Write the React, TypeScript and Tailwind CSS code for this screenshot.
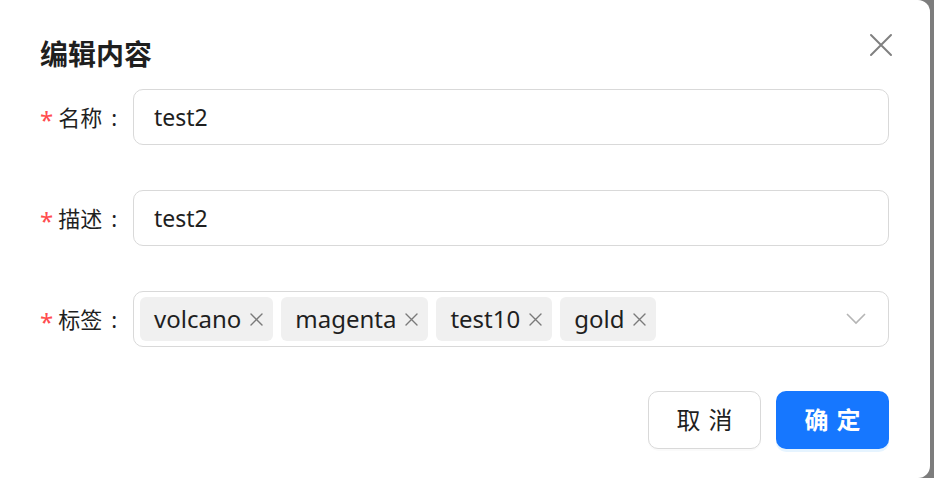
import React from "react";

const tags = ["volcano", "magenta", "test10", "gold"];

function Label({ text }: { text: string }) {
  return (
    <div className="w-[93px] shrink-0 flex items-center text-[22px] text-[#1f1f1f]">
      <span className="text-[#ff4d4f] mr-[5px] text-[24px] leading-none pt-[6px]">*</span>
      <span>{text}</span>
      <span className="ml-[9px]">:</span>
    </div>
  );
}

function CloseSmall() {
  return (
    <svg width="15" height="15" viewBox="0 0 15 15" className="shrink-0">
      <path d="M2 2 L13 13 M13 2 L2 13" stroke="#7a7a7a" strokeWidth="1.4" strokeLinecap="round" />
    </svg>
  );
}

export default function App() {
  return (
    <div
      className="w-[934px] h-[478px] bg-[#7d7d7d] overflow-hidden"
      style={{ fontFamily: '"Noto Sans", "Noto Sans CJK SC", sans-serif' }}
    >
      <div className="relative w-[930px] h-[478px] bg-white rounded-r-[12px] pl-[40px] pr-[41px] pt-[38px] flex flex-col">
        <button className="absolute left-[868px] top-[32px] w-[26px] h-[26px] flex items-center justify-center">
          <svg width="24" height="24" viewBox="0 0 24 24">
            <path d="M2 2 L22 22 M22 2 L2 22" stroke="#808080" strokeWidth="2" strokeLinecap="round" />
          </svg>
        </button>

        <h1 className="h-[32px] leading-[32px] text-[28px] font-bold text-[#1f1f1f]">编辑内容</h1>

        <div className="mt-[19px] flex flex-col gap-[45px]">
          <div className="flex items-center h-[56px]">
            <Label text="名称" />
            <div className="flex-1 h-[56px] border border-[#d9d9d9] rounded-[10px] flex items-center px-[20px] text-[23px] text-[#1f1f1f]">
              test2
            </div>
          </div>

          <div className="flex items-center h-[56px]">
            <Label text="描述" />
            <div className="flex-1 h-[56px] border border-[#d9d9d9] rounded-[10px] flex items-center px-[20px] text-[23px] text-[#1f1f1f]">
              test2
            </div>
          </div>

          <div className="flex items-center h-[56px]">
            <Label text="标签" />
            <div className="flex-1 h-[56px] border border-[#d9d9d9] rounded-[10px] flex items-center pl-[6px] pr-[22px]">
              <div className="flex-1 flex items-center gap-[8px]">
                {tags.map((t) => (
                  <div
                    key={t}
                    className="h-[44px] bg-[#f0f0f0] rounded-[6px] flex items-center gap-[8px] pl-[14px] pr-[9px] text-[24px] text-[#1f1f1f]"
                  >
                    <span>{t}</span>
                    <CloseSmall />
                  </div>
                ))}
              </div>
              <svg width="20" height="12" viewBox="0 0 20 12">
                <path d="M1 1 L10 10 L19 1" fill="none" stroke="#b5b5b5" strokeWidth="1.6" />
              </svg>
            </div>
          </div>
        </div>

        <div className="mt-[44px] flex justify-end gap-[15px]">
          <button className="w-[113px] h-[58px] border border-[#d9d9d9] rounded-[10px] bg-white text-[24px] text-[#1f1f1f] tracking-[8px] pl-[8px] shadow-[0_2px_0_rgba(0,0,0,0.02)]">
            取消
          </button>
          <button className="w-[113px] h-[58px] rounded-[10px] bg-[#1677ff] text-[24px] font-bold text-white tracking-[8px] pl-[8px] shadow-[0_3px_0_rgba(5,145,255,0.1)]">
            确定
          </button>
        </div>
      </div>
    </div>
  );
}
